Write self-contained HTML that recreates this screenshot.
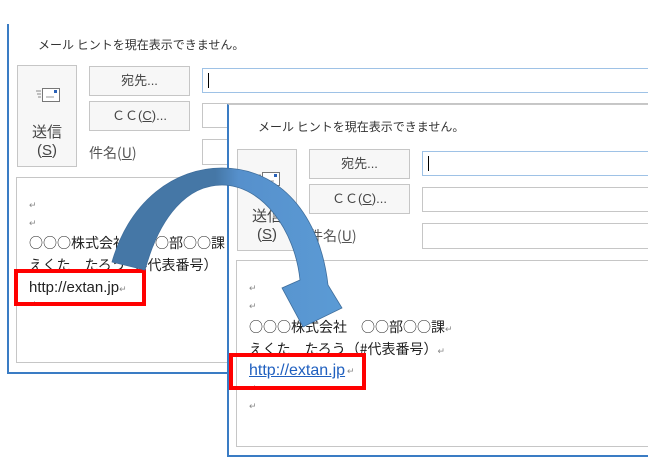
<!DOCTYPE html>
<html><head><meta charset="utf-8"><style>
*{margin:0;padding:0;box-sizing:border-box}
body{width:648px;height:464px;background:#fff;position:relative;overflow:hidden;font-family:"Liberation Sans","Noto Sans CJK JP",sans-serif;color:#333}
.a{position:absolute}
.win{position:absolute;background:#fff}
.btn{position:absolute;border:1px solid #c6c6c6;background:#f7f7f7;text-align:center;font-size:13px;color:#444}
.inp{position:absolute;border:1px solid #c6c6c6;background:#fff}
.t{position:absolute;font-size:12px;color:#333;white-space:nowrap;font-family:"Noto Sans CJK JP",sans-serif}
.body{position:absolute;border:1px solid #c6c6c6;background:#fff}
.ln{position:absolute;font-size:14px;white-space:nowrap;color:#222}
.j{font-family:"Noto Sans CJK JP",sans-serif;line-height:20px}
.r{font-size:9px;color:#888}
.red{position:absolute;border:4px solid #f00}
</style></head><body>

<!-- window 1 -->
<div class="win" style="left:7px;top:24px;width:660px;height:350px;border-left:2px solid #3a7cc4;border-bottom:2px solid #3a7cc4"></div>
<div class="t" style="left:38px;top:36px">メール ヒントを現在表示できません。</div>
<div class="btn" style="left:17px;top:65px;width:60px;height:102px">
<svg style="position:absolute;left:17px;top:21px" width="26" height="17"><path d="M1 4h5M2 7h4M3 10h3" stroke="#888"/><rect x="7.5" y="1.5" width="17" height="13" fill="#fff" stroke="#777"/><rect x="19" y="3" width="3" height="3" fill="#2a62b8"/><path d="M11 10h8" stroke="#999"/></svg>
<div style="position:absolute;left:0;right:0;top:58px;font-size:15px;line-height:18px">送信<br>(<u>S</u>)</div></div>
<div class="btn" style="left:89px;top:66px;width:101px;height:30px;line-height:28px">宛先...</div>
<div class="btn" style="left:89px;top:101px;width:101px;height:30px;line-height:28px">ＣＣ(<u>C</u>)...</div>
<div class="t" style="left:89px;top:143px;font-size:14px;color:#555">件名(<u>U</u>)</div>
<div class="inp" style="left:202px;top:68px;width:460px;height:25px;border-color:#9ec2e6"><div style="position:absolute;left:5px;top:4px;width:1px;height:15px;background:#000"></div></div>
<div class="inp" style="left:202px;top:103px;width:460px;height:25px"></div>
<div class="inp" style="left:202px;top:139px;width:460px;height:26px"></div>
<div class="body" style="left:16px;top:177px;width:660px;height:186px"></div>
<div class="ln r" style="left:29px;top:200px">↵</div>
<div class="ln r" style="left:29px;top:218px">↵</div>
<div class="ln j" style="left:29px;top:233px">○○○株式会社　○○部○○課</div>
<div class="ln j" style="left:29px;top:255px">えくた　たろう（#代表番号）</div>
<div class="ln" style="left:29px;top:279px;font-size:15px">http://extan.jp<span class="r">↵</span></div>
<div class="ln r" style="left:29px;top:299px">↵</div>
<div class="red" style="left:14px;top:269px;width:132px;height:37px"></div>

<!-- window 2 -->
<div class="win" style="left:227px;top:104px;width:430px;height:353px;border-left:2px solid #3a7cc4;border-bottom:2px solid #3a7cc4;border-top:1.5px solid #c8c8c8"></div>
<div class="t" style="left:258px;top:118px">メール ヒントを現在表示できません。</div>
<div class="btn" style="left:237px;top:149px;width:60px;height:102px">
<svg style="position:absolute;left:17px;top:21px" width="26" height="17"><path d="M1 4h5M2 7h4M3 10h3" stroke="#888"/><rect x="7.5" y="1.5" width="17" height="13" fill="#fff" stroke="#777"/><rect x="19" y="3" width="3" height="3" fill="#2a62b8"/><path d="M11 10h8" stroke="#999"/></svg>
<div style="position:absolute;left:0;right:0;top:58px;font-size:15px;line-height:18px">送信<br>(<u>S</u>)</div></div>
<div class="btn" style="left:309px;top:149px;width:101px;height:30px;line-height:28px">宛先...</div>
<div class="btn" style="left:309px;top:184px;width:101px;height:30px;line-height:28px">ＣＣ(<u>C</u>)...</div>
<div class="t" style="left:309px;top:226px;font-size:14px;color:#555">件名(<u>U</u>)</div>
<div class="inp" style="left:422px;top:151px;width:240px;height:25px;border-color:#9ec2e6"><div style="position:absolute;left:5px;top:4px;width:1px;height:15px;background:#000"></div></div>
<div class="inp" style="left:422px;top:187px;width:240px;height:25px"></div>
<div class="inp" style="left:422px;top:223px;width:240px;height:26px"></div>
<div class="body" style="left:236px;top:260px;width:440px;height:187px"></div>
<div class="ln r" style="left:249px;top:283px">↵</div>
<div class="ln r" style="left:249px;top:301px">↵</div>
<div class="ln j" style="left:249px;top:317px">○○○株式会社　○○部○○課<span class="r">↵</span></div>
<div class="ln j" style="left:249px;top:339px">えくた　たろう（#代表番号）<span class="r">↵</span></div>
<div class="ln" style="left:249px;top:362px;color:#1f5fbf;text-decoration:underline;font-size:16px">http://extan.jp</div><div class="ln r" style="left:347px;top:366px">↵</div>
<div class="ln r" style="left:249px;top:383px">↵</div>
<div class="ln r" style="left:249px;top:401px">↵</div>
<div class="red" style="left:229px;top:353px;width:137px;height:37px"></div>

<!-- arrow -->
<svg class="a" style="left:0;top:0" width="648" height="464">
<defs><linearGradient id="g" x1="0" x2="1" y1="0" y2="0"><stop offset="0.45" stop-color="#4577a6"/><stop offset="0.55" stop-color="#5690cc"/><stop offset="1" stop-color="#5b9bd5"/></linearGradient></defs>
<path d="M112,262 C130,200 175,168 222,168 C280,168 320,215 328,285 L342,308 L303,327 L282,288 L300,280 C295,230 262,185 222,185 C188,185 160,215 145,270 Z" fill="url(#g)" stroke="#3f6e9c" stroke-width="0.8"/>
</svg>
</body></html>
